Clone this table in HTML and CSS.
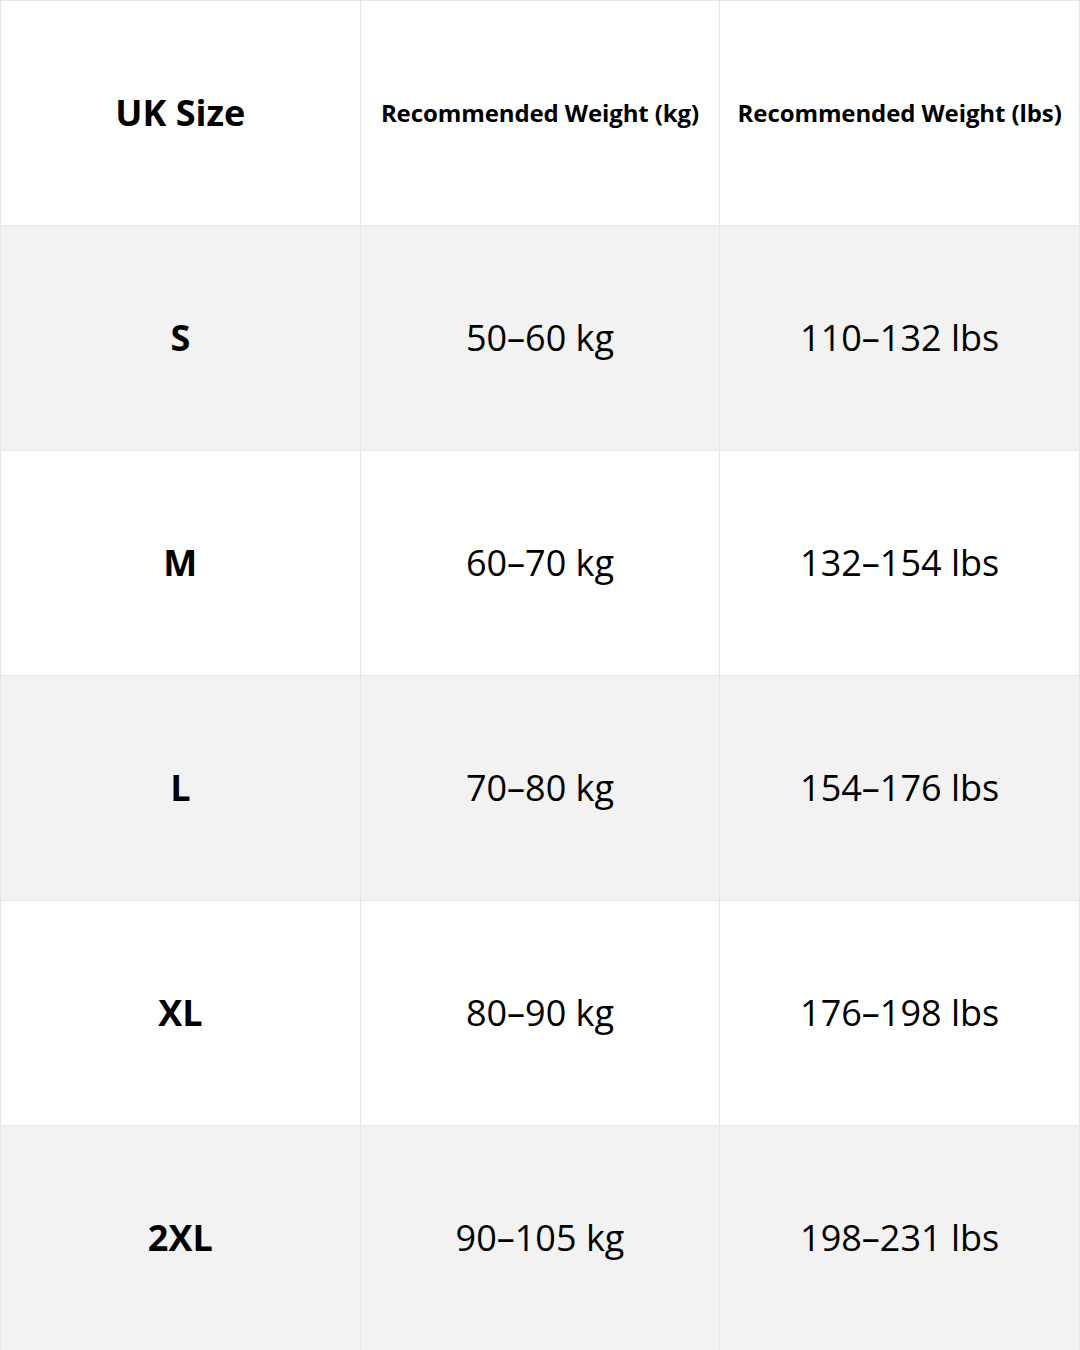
FILE: index.html
```html
<!DOCTYPE html>
<html lang="en">
<head>
<meta charset="utf-8">
<title>Size chart</title>
<link rel="stylesheet" href="styles.css">
</head>
<body>
<table class="chart">
  <colgroup>
    <col class="col">
    <col class="col">
    <col class="col">
  </colgroup>
  <thead>
    <tr>
      <th class="head-main">UK Size</th>
      <th class="head-sub">Recommended Weight (kg)</th>
      <th class="head-sub">Recommended Weight (lbs)</th>
    </tr>
  </thead>
  <tbody>
    <tr class="shade"><td class="size">S</td><td>50–60 kg</td><td>110–132 lbs</td></tr>
    <tr><td class="size">M</td><td>60–70 kg</td><td>132–154 lbs</td></tr>
    <tr class="shade"><td class="size">L</td><td>70–80 kg</td><td>154–176 lbs</td></tr>
    <tr><td class="size">XL</td><td>80–90 kg</td><td>176–198 lbs</td></tr>
    <tr class="shade"><td class="size">2XL</td><td>90–105 kg</td><td>198–231 lbs</td></tr>
  </tbody>
</table>
</body>
</html>
```
FILE: styles.css
```css
html, body {
  margin: 0;
  padding: 0;
  background: #ffffff;
}
body {
  font-family: "Open Sans", "Noto Sans", sans-serif;
  color: #000;
}
.chart {
  width: 1080px;
  height: 1350px;
  border-collapse: collapse;
  table-layout: fixed;
}
.col {
  width: 33.3333%;
}
.chart th, .chart td {
  border: 1px solid #e6e6e6;
  text-align: center;
  vertical-align: middle;
  height: 222px;
  padding: 0 0 2px 0;
}
.head-main {
  font-size: 36px;
  font-weight: 700;
}
.head-sub {
  font-size: 24px;
  font-weight: 700;
  letter-spacing: -0.1px;
}
.chart td {
  font-size: 36px;
  font-weight: 400;
}
.chart td.size {
  font-weight: 700;
}
.shade {
  background: #f2f2f2;
}
```
